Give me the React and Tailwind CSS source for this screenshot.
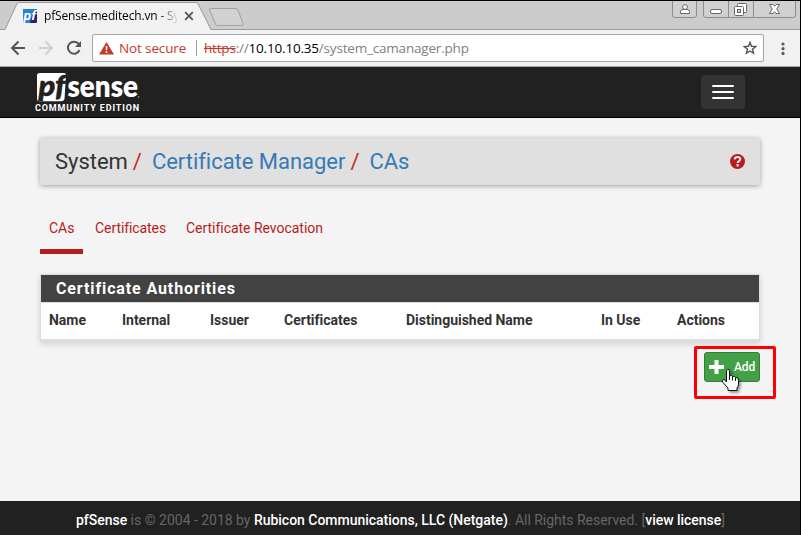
import React from 'react';

const UI = "font-['Open_Sans','Noto_Sans',sans-serif]";

function TabStrip() {
  return (
    <div className="relative flex h-[29px] shrink-0 bg-[#cccccc]">
      <svg className="absolute inset-0" width="800" height="29" viewBox="0 0 800 29">
        <path d="M0 28.5H5L17 2.5Q17.500 1.500 19 1.500H196Q197.500 1.500 198.500 3.500L211 28.500H800" fill="none" stroke="#9c9c9c" />
        <path d="M5.500 29L17.500 3Q18 2 19 2H196Q197 2 198 4L210.500 29Z" fill="#f1f1f1" />
        <path d="M210.500 7.500H236Q237.300 7.500 238 9L243 22.500Q243.500 24.500 241.500 24.500H217.500Q216 24.500 215.500 23L209.500 9Q209 7.500 210.500 7.500Z" fill="#d1d1d1" stroke="#a0a0a0" />
      </svg>
      <div className="relative ml-[23px] mt-2 flex h-[14px] w-[180px] items-center">
        <svg width="14" height="14" viewBox="0 0 14 14" className="shrink-0 overflow-visible">
          <rect width="14" height="14" rx="1" fill="#212179" />
          <path d="M0 1Q0 0 1 0H14V2Q10 1 9 6L7 14H0Z" fill="#2385cf" />
          <text x="0.500" y="10.500" fontFamily="Roboto" fontSize="12" fontStyle="italic" fontWeight="700" fill="#fff" textLength="12.500" lengthAdjust="spacingAndGlyphs">pf</text>
        </svg>
        <div className="ml-[7px] w-[133px] whitespace-nowrap bg-gradient-to-r from-black from-82% to-[#dddddd] bg-clip-text text-[12px] leading-[18px] tracking-[-0.16px] text-transparent">pfSense.meditech.vn - Sy</div>
        <svg className="ml-[7px]" width="10" height="10" viewBox="0 0 10 10"><path d="M1.200 1.200L8.800 8.800M8.800 1.200L1.200 8.800" stroke="#555" strokeWidth="1.800" /></svg>
      </div>
      <svg className="relative ml-auto mr-[3px]" width="125" height="18" viewBox="672 1 125 18">
        <g fill="#d0d0d0" stroke="#8d8d8d">
          <path d="M672.500 0V15Q672.500 17.500 675 17.500H694Q696.500 17.500 696.500 15V0" />
          <path d="M703.500 0V15Q703.500 17.500 706 17.500H793Q795.500 17.500 795.500 15V0M728.500 1V17M753.500 1V17" />
        </g>
        <g fill="#fff" stroke="#666">
          <path d="M680.500 13.500V11.500Q680.500 9.500 683 9.500H687Q689.500 9.500 689.500 11.500V13.500Z" />
          <circle cx="685" cy="7" r="2.400" />
          <rect x="710.500" y="9.500" width="11" height="4" rx="1.500" />
          <rect x="737.500" y="3.500" width="9" height="9" rx="1" />
          <rect x="734.500" y="6.500" width="9" height="9" rx="1" />
          <rect x="737.500" y="9.500" width="3" height="3" fill="#d0d0d0" />
          <path d="M769.500 4.500H773L774.500 6.300L776 4.500H779.500L776.700 9L779.500 13.500H776L774.500 11.700L773 13.500H769.500L772.300 9Z" />
        </g>
      </svg>
    </div>
  );
}

function AddressBar() {
  return (
    <div className="flex h-[37px] shrink-0 items-start border-b border-[#aaaaaa] bg-[#f1f1f1] pt-1">
      <svg width="92" height="28" viewBox="0 34 92 28" fill="none" strokeWidth="2">
        <path d="M25 48H12.500M18.500 41.500L12 48L18.500 54.500" stroke="#555" />
        <path d="M39 48H51.500M45.500 41.500L52 48L45.500 54.500" stroke="#d0d0d0" />
        <path d="M78.800 44.200A6 6 0 1 0 79.500 50" stroke="#555" />
        <path d="M81 41V47H75Z" fill="#555" />
      </svg>
      <div className="flex h-7 w-[672px] items-center rounded-[2px] border border-[#a8a8a8] bg-white">
        <svg className="ml-[6px] shrink-0" width="15" height="13" viewBox="0 0 15 13">
          <path d="M7.500 0L15 12.500H0Z" fill="#c5392b" />
          <path d="M7.500 4V8.200M7.500 9.300V11" stroke="#fff" strokeWidth="1.500" />
        </svg>
        <span className="ml-[5px] w-[67px] whitespace-nowrap text-[13.5px] leading-5 tracking-[-0.13px] text-[#c5392b]">Not secure</span>
        <span className="ml-[10px] h-4 w-px bg-[#a0a0a0]" />
        <span className="ml-[7px] whitespace-nowrap text-[13.5px] leading-5 tracking-[-0.19px] text-[#808080]"><span className="text-[#c5392b] line-through">https</span>://<span className="text-black">10.10.10.35</span>/system_camanager.php</span>
        <svg className="ml-auto mr-[6px]" width="14" height="14" viewBox="0 0 14 14"><path d="M7 1.500L8.500 5.300L12.700 5.600L9.500 8.200L10.600 12.300L7 10L3.400 12.300L4.500 8.200L1.300 5.600L5.500 5.300Z" fill="none" stroke="#555" strokeWidth="1.400" /></svg>
      </div>
      <svg className="ml-[17px] mt-2" width="4" height="14" viewBox="0 0 4 14" fill="#5a5a5a"><circle cx="2" cy="2" r="1.600" /><circle cx="2" cy="6.700" r="1.600" /><circle cx="2" cy="11.400" r="1.600" /></svg>
    </div>
  );
}

function NavBar() {
  return (
    <nav className="flex h-[51px] shrink-0 items-start justify-between border-b border-black bg-[#212121] pl-[35px] pr-[55px]">
      <div className="pt-[6px]">
        <svg width="106" height="29" viewBox="35 73 106 29" className="block overflow-visible">
          <path d="M39.500 73H64Q66 73 66 75L64.500 98.500Q64 101.300 61.500 101.300H39Q37 101.300 37 99V75.500Q37 73 39.500 73Z" fill="#fff" />
          <text x="38.500" y="95.500" fontFamily="Lato" fontSize="28" fontStyle="italic" fontWeight="900" fill="#212121" stroke="#212121" strokeWidth=".5" textLength="27" lengthAdjust="spacingAndGlyphs">pf</text>
          <text x="67.500" y="96.500" fontFamily="Lato" fontSize="29.500" fontWeight="800" fill="#fff" textLength="70.500" lengthAdjust="spacingAndGlyphs">sense</text>
          <circle cx="138.700" cy="97" r=".8" fill="#aaa" />
        </svg>
        <div className="mt-px whitespace-nowrap text-[9px] font-bold leading-[10px] tracking-[0.87px] text-white">COMMUNITY EDITION</div>
      </div>
      <button className="mt-2 flex h-[34px] w-11 flex-col items-center justify-center gap-1 rounded bg-[#333333]">
        <span className="h-[2px] w-[22px] rounded-[1px] bg-white" />
        <span className="h-[2px] w-[22px] rounded-[1px] bg-white" />
        <span className="h-[2px] w-[22px] rounded-[1px] bg-white" />
      </button>
    </nav>
  );
}

function AddButton() {
  return (
    <div className="relative mt-[10px] self-end">
      <button className="flex h-[30px] w-14 items-center rounded-[3px] border border-[#367d39] bg-[#43a047] pl-1 text-white">
        <svg width="15" height="14" viewBox="0 0 15 14"><path d="M5.500 0H9.500V5H15V9H9.500V14H5.500V9H0V5H5.500Z" fill="#fff" /></svg>
        <span className="ml-[10px] text-[12px] font-medium tracking-[-0.1px]">Add</span>
      </button>
      <div className="absolute -left-[10px] -top-[6px] h-[53px] w-[82px] rounded-[2px] border-[3px] border-[#ff0000]" />
      <svg className="absolute left-[17px] top-[16px] drop-shadow-[2px_2px_1px_rgba(0,0,0,0.35)]" width="20" height="24" viewBox="0 0 20 24">
        <path d="M6.500 1.500Q8.500 .5 8.500 3V8Q10.500 6.500 11.500 8.500Q13.500 7.500 14.500 9.500Q17.500 9 17.500 12V16Q17.500 18 16 20V22.500H7V20L2 14.500Q.5 12.500 2 11.500Q3.500 11 5.500 14V3Q5.500 2 6.500 1.500Z" fill="#fff" stroke="#111" />
        <path d="M8.500 8V12M11.500 8.500V12.500M14.500 9.500V13" stroke="#111" fill="none" />
      </svg>
    </div>
  );
}

export default function App() {
  return (
    <div className="flex h-[535px] w-[801px] flex-col overflow-hidden border-r border-t border-black bg-[#f4f4f4] font-['Roboto',sans-serif]">
      <div className={UI}>
        <TabStrip />
        <AddressBar />
      </div>
      <NavBar />
      <main className="flex flex-1 flex-col px-10 pt-5">
        <header className="flex h-[47px] shrink-0 items-center rounded-[2px] bg-[#e0e0e0] pl-[15px] pr-[15px] text-[22px] tracking-[-0.03px] shadow-[0_1px_5px_rgba(0,0,0,0.35)]">
          <span className="text-[#333333]">System</span>
          <span className="ml-[5px] text-[#c62828]">/</span>
          <span className="ml-[10px] text-[#337ab7]">Certificate Manager</span>
          <span className="ml-[5px] text-[#c62828]">/</span>
          <span className="ml-[10px] text-[#337ab7]">CAs</span>
          <svg className="ml-auto" width="15" height="15" viewBox="0 0 15 15">
            <circle cx="7.500" cy="7.500" r="7.500" fill="#b71c1c" />
            <path d="M4.700 5.300C5 2.400 10.300 2.300 10.300 5.200C10.300 7 7.700 7 7.700 9" fill="none" stroke="#eee" strokeWidth="2.100" />
            <path d="M6.500 10.200H8.800V12.400H6.500Z" fill="#eee" />
          </svg>
        </header>
        <div className="mt-[24px] flex h-[45px] shrink-0 text-[14px] leading-[38px] text-[#b71c1c]">
          <a className="w-[43px] border-b-[5px] border-[#b71c1c] pl-[9px]">CAs</a>
          <a className="ml-[12px] w-[71px] tracking-[-0.08px]">Certificates</a>
          <a className="ml-[20px] tracking-[-0.03px]">Certificate Revocation</a>
        </div>
        <section className="mt-5 h-[68px] shrink-0 border border-b-[3px] border-[#dddddd] bg-white shadow-[0_2px_6px_rgba(0,0,0,0.15)]">
          <h2 className="h-[27px] bg-[#424242] pl-[15px] text-[16px] font-bold leading-[27px] tracking-[0.88px] text-white">Certificate Authorities</h2>
          <div className="grid h-[37px] grid-cols-[73px_88px_74px_122px_195px_76px_1fr] border-t border-[#dddddd] pl-2 text-[14px] font-bold leading-[35px] tracking-[-0.02px] text-[#333333]">
            <span>Name</span><span>Internal</span><span>Issuer</span><span>Certificates</span><span>Distinguished Name</span><span>In Use</span><span>Actions</span>
          </div>
        </section>
        <AddButton />
      </main>
      <footer className="flex h-[34px] shrink-0 items-center bg-[#212121] pl-[76px] pt-1 text-[14px] tracking-[-0.02px] text-[#666666]">
        <p className="whitespace-nowrap"><b className="font-medium text-white">pfSense</b> is © 2004 - 2018 by <b className="font-medium text-white">Rubicon Communications, LLC (Netgate)</b>. All Rights Reserved. [<b className="font-medium text-white">view license</b>]</p>
      </footer>
    </div>
  );
}
